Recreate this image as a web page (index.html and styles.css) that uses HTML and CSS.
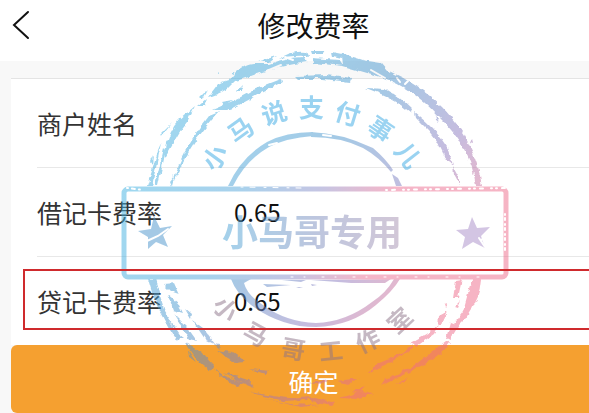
FILE: index.html
```
<!DOCTYPE html>
<html lang="zh-CN">
<head>
    <meta charset="UTF-8">
    <meta name="viewport" content="width=device-width, initial-scale=1.0">
    <title>修改费率</title>
    <link rel="stylesheet" href="styles.css">
</head>
<body>
    <div class="page">
        <header class="nav-bar">
            <button type="button" class="back-btn" aria-label="返回">
                <svg width="18" height="30" viewBox="0 0 18 30" fill="none" stroke="#111" stroke-width="2" stroke-linecap="round">
                    <path d="M16 2 L2 15 L16 28"/>
                </svg>
            </button>
            <h1 class="nav-title">修改费率</h1>
        </header>

        <form class="rate-form">
            <div class="card">
                <div class="row">
                    <label class="row-label" for="merchant">商户姓名</label>
                    <input class="row-input" type="text" id="merchant" name="merchant">
                </div>
                <div class="row">
                    <label class="row-label" for="debit">借记卡费率</label>
                    <input class="row-input" type="text" id="debit" name="debit" value="0.65">
                </div>
                <div class="row row-marked">
                    <label class="row-label" for="credit">贷记卡费率</label>
                    <input class="row-input" type="text" id="credit" name="credit" value="0.65">
                </div>
            </div>
            <button type="submit" class="submit-btn">确定</button>
        </form>

        <svg class="stamp" viewBox="113 44 400 369" width="400" height="369">
            <defs>
                <linearGradient id="ink" gradientUnits="userSpaceOnUse" x1="160" y1="100" x2="460" y2="340">
                    <stop offset="0" stop-color="#40b2e2"/>
                    <stop offset=".2" stop-color="#48a8dc"/>
                    <stop offset=".42" stop-color="#4b95cd"/>
                    <stop offset=".66" stop-color="#8d7cc0"/>
                    <stop offset=".86" stop-color="#ee6c8a"/>
                </linearGradient>
                <linearGradient id="band" gradientUnits="userSpaceOnUse" x1="120" y1="190" x2="480" y2="310">
                    <stop offset="0" stop-color="#40b2e2"/>
                    <stop offset=".3" stop-color="#55a5da"/>
                    <stop offset=".5" stop-color="#8d8cc8"/>
                    <stop offset=".68" stop-color="#ec7094"/>
                    <stop offset="1" stop-color="#ee6c8a"/>
                </linearGradient>
                <linearGradient id="word" gradientUnits="userSpaceOnUse" x1="222" y1="0" x2="402" y2="0">
                    <stop offset="0" stop-color="#4ba4d8"/>
                    <stop offset=".5" stop-color="#7c8fc0"/>
                    <stop offset="1" stop-color="#a890b0"/>
                </linearGradient>
                <filter id="rough" x="-5%" y="-5%" width="110%" height="110%" color-interpolation-filters="sRGB">
                    <feTurbulence type="fractalNoise" baseFrequency=".15" numOctaves="2" seed="4" result="n"/>
                    <feDisplacementMap in="SourceGraphic" in2="n" scale="5" xChannelSelector="R" yChannelSelector="G"/>
                </filter>
                <!-- worn spots -->
                <mask id="worn" maskUnits="userSpaceOnUse" x="113" y="44" width="400" height="369">
                    <rect x="113" y="44" width="400" height="369" fill="#fff"/>
                    <g fill="none" stroke="#000" stroke-linecap="round">
                        <path d="M146 241 L157 236 L167 229 M478 238 L484 247 M480 240 L489 236" stroke-width="2"/>
                        <path d="M119 187 L142 190" stroke-width="2" stroke-dasharray="3 4 1 4"/>
                        <path d="M240 187 L300 188" stroke-width="1" stroke-dasharray="2 7 5 9"/>
                        <path d="M385 190 L508 188" stroke-width="2" stroke-dasharray="1 5 3 8 1 4"/>
                        <path d="M504 214 V254" stroke-width="2" stroke-dasharray="1 3 2 4"/>
                        <path d="M290 277 H480" stroke-width="1" stroke-dasharray="2 11 1 17"/>
                        <path d="M268 70 L280 65 M284 57 L292 60 M370 70 L384 78 M396 78 L399 82 M404 84 L407 81 M322 135 L330 136 M268 145 L276 143" stroke-width="2"/>
                    </g>
                </mask>
            </defs>

            <g mask="url(#worn)">
                <g fill="url(#ink)" filter="url(#rough)">
                    <!-- outer ring, upper half -->
                    <path d="M146 186 L157 150 L160 143 L151 186Z M154 186 L163 148 L165 150 L157 186Z"/>
                    <path d="M164 152 Q168 130 178 120 L194 106 L186 122 Q177 133 172 144 L164 158Z"/>
                    <path d="M160 134 L171 123 L161 136Z M196 106 L206 98 L203 106Z M198 99 L207 90 L202 99Z M150 162 L153 155 L152 165Z"/>
                    <path d="M207 97 L217 84 Q228 78 235 80 L226 89 Q216 95 207 97Z M217 73 L218 72 L218 75Z M230 74 L234 71 L232 75Z"/>
                    <path d="M227 82 Q240 65 252 64 L268 64 Q285 57 304 57 L306 62 Q275 66 250 76 Q238 81 227 82Z"/>
                    <path d="M256 62 L276 56 L268 62Z M278 59 Q290 50 305 52 L307 56 Q290 55 278 59Z"/>
                    <path d="M310 51 L324 51 L322 54 L311 54Z M311 58 L338 60 L342 66 L312 63Z M331 52 L346 55 L362 60 L350 60 L332 56Z"/>
                    <path d="M341 57 L380 63 L386 70 Q418 84 441 107 Q474 140 481 186 L475 186 Q470 147 437 116 Q412 88 380 77 L342 66Z"/>
                    <path d="M466 143 L464 152 L474 166 L470 150Z M471 138 L472 144 L469 143Z"/>
                    <!-- second ring, upper half -->
                    <path d="M172 182 Q180 152 208 116 L218 112 Q190 142 178 172Z M168 181 L173 175 L170 186Z"/>
                    <path d="M211 110 Q240 98 252 90 L280 79 L281 82 L258 94 Q236 107 225 110Z M221 102 L231 100 L224 106Z M236 91 L242 85 L240 91Z"/>
                    <path d="M294 76 L326 75 L350 79 L349 82 L322 79 L297 79Z"/>
                    <path d="M365 88 L385 89 Q400 98 411 109 L410 113 Q395 100 380 94Z"/>
                    <path d="M413 112 Q435 129 446 147 L452 165 L444 159 Q440 145 428 131 L414 117Z M452 166 L458 177 L458 184 L453 175Z M434 114 L438 122 L435 120Z"/>
                    <!-- second ring, lower half -->
                    <path d="M162 284 L173 283 L178 294 L169 291Z M167 295 L177 303 L182 313 L172 310Z M184 309 L191 315 L190 319Z"/>
                    <path d="M173 314 L186 327 L196 341 L188 339Z M191 320 L202 328 L214 344 L204 339Z M213 343 L218 344 L220 349Z M216 350 L232 352 L245 361 L232 362Z M249 369 L268 371 L264 374Z"/>
                    <path d="M455 280 L461 279 L457 298 L452 298Z M443 304 L447 303 L444 307Z M437 316 L446 311 L440 324 L436 325Z"/>
                    <path d="M410 343 L431 331 L438 325 L433 334 L416 346Z M367 373 L376 364 L400 354 L412 345 L410 350 L390 362Z M336 381 L358 378 L347 384Z M308 383 L328 380 L320 385Z"/>
                    <!-- outer ring, lower half -->
                    <path d="M147 279 L154 279 L164 312 L180 336 L177 342 Q155 312 147 279Z M169 320 L172 330 L183 338 L176 338Z"/>
                    <path d="M184 343 L200 352 L214 367 L208 370 Q194 361 184 343Z M187 350 L195 362 L188 357Z M212 368 L222 375 L243 384 L236 386 Q222 380 212 368Z"/>
                    <path d="M222 372 L247 380 L253 388 L236 381Z M248 392 L285 398 L310 396 L306 400 L282 401Z M263 399 L290 404 L318 405 L300 407Z"/>
                    <path d="M308 396 L334 403 L331 406 L310 402Z M338 398 L362 391 L372 393 L355 399Z M350 392 L364 387 L358 393Z"/>
                    <path d="M471 279 L480 279 Q479 298 465 318 L456 327 L453 323 L462 311Z M454 307 L460 301 L457 308Z"/>
                    <path d="M450 322 L458 325 L449 340 L445 338Z M446 341 L449 343 Q438 358 424 364 L380 386 L384 380 Q408 371 424 357Z M395 384 L408 377 L402 382Z"/>
                </g>

                <!-- inner ring -->
                <g fill="url(#ink)">
                    <path d="M227 186 Q240 157 266 142 Q285 132 312 132 L312 136 Q285 138 268 147 Q245 160 232 186Z"/>
                    <path d="M310 132 Q340 133 372 148 Q385 159 392 170 L390 172 Q378 157 362 148 Q340 137 310 137Z M391 174 L397 178 L401 186 L395 186Z"/>
                    <path d="M230 279 Q235 293 250 305 Q280 327 315 327 Q350 326 375 305 Q392 291 399 279 L393 279 Q385 293 371 302 Q345 322 315 323 Q285 322 262 305 Q246 295 243 283 L250 279Z"/>
                    <path d="M262 284 L290 285 L266 287Z M310 280 L390 279 L384 283 L350 283Z M281 280 L305 280 L300 282Z M310 284 L316 285 L311 286Z M295 287 L302 287 L298 288Z"/>
                </g>

                <rect x="123" y="189" width="382" height="88" rx="4" fill="none" stroke="url(#band)" stroke-width="5"/>
                <path d="M153 216 L159 228 L171 226 L162 235 L167 247 L155 242 L147 249 L147 237 L137 231 L150 229Z" fill="#4b95cd"/>
                <path d="M471 217 L476 228 L489 227 L480 236 L484 248 L472 242 L461 249 L464 237 L455 230 L467 229Z" fill="#a88cc8"/>
            </g>

            <text class="stamp-arc" x="214 235 264 298 332 364 392" y="173 145 126 117 119 130 151" rotate="-54 -36 -18 0 17 34 52">小马说支付事儿</text>
            <text class="stamp-word" x="221" y="246">小马哥专用</text>
            <text class="stamp-arc stamp-studio" x="210 240 279 319 360 396" y="306 336 356 361 354 335" rotate="48 29 10 -6 -26 -43">小马哥工作室</text>
        </svg>
    </div>
</body>
</html>
```
FILE: styles.css
```
* {
    margin: 0;
    padding: 0;
    box-sizing: border-box;
}

body {
    font-family: 'Noto Sans CJK SC', sans-serif;
    background: #f8f8f8;
    color: #333;
}

.page {
    position: relative;
    overflow: hidden;
}

.nav-bar {
    display: grid;
    grid-template-columns: 86px 1fr 48px;
    align-items: center;
    height: 61px;
    padding-bottom: 12px;
    background: #fff;
}

.back-btn {
    display: flex;
    padding-left: 12px;
    background: none;
    border: none;
    cursor: pointer;
}

.nav-title {
    color: #111;
    font-size: 28px;
    font-weight: 400;
    line-height: 40px;
    text-align: center;
}

.rate-form {
    padding: 17px 0 0 11px;
}

.card {
    background: #fff;
    border-top: 1px solid #e4e4e4;
    padding-left: 26px;
}

.row {
    position: relative;
    display: flex;
    align-items: center;
    height: 89px;
    border-bottom: 1px solid #e8e8e8;
}

.row:last-child {
    height: 88px;
    border-bottom: none;
}

.row-marked::after {
    content: '';
    position: absolute;
    inset: 12px 0 15px -14px;
    border: 2px solid #cf2a2d;
    border-right: none;
    pointer-events: none;
    z-index: 2;
}

.row-label {
    width: 197px;
    font-size: 25px;
    line-height: 36px;
}

.row-input {
    flex: 1;
    min-width: 0;
    border: none;
    outline: none;
    background: transparent;
    color: #111;
    font-family: inherit;
    font-size: 24px;
    line-height: 36px;
}

.submit-btn {
    display: block;
    width: 100%;
    height: 68px;
    padding: 4px 0 0 27px;
    border: none;
    border-radius: 6px 0 0 6px;
    background: #f5a030;
    color: #fff;
    font-family: inherit;
    font-size: 25px;
    line-height: 36px;
    cursor: pointer;
}

.stamp {
    position: absolute;
    top: 44px;
    left: 50%;
    margin-left: 19px;
    transform: translateX(-50%);
    opacity: 0.5;
    pointer-events: none;
    z-index: 1;
}

.stamp-arc {
    fill: #38a8e4;
    font-size: 25px;
    font-weight: 700;
}

.stamp-word {
    fill: url(#word);
    font-size: 36px;
    font-weight: 700;
}

.stamp-studio {
    fill: #8c7488;
    font-size: 24px;
}
```
